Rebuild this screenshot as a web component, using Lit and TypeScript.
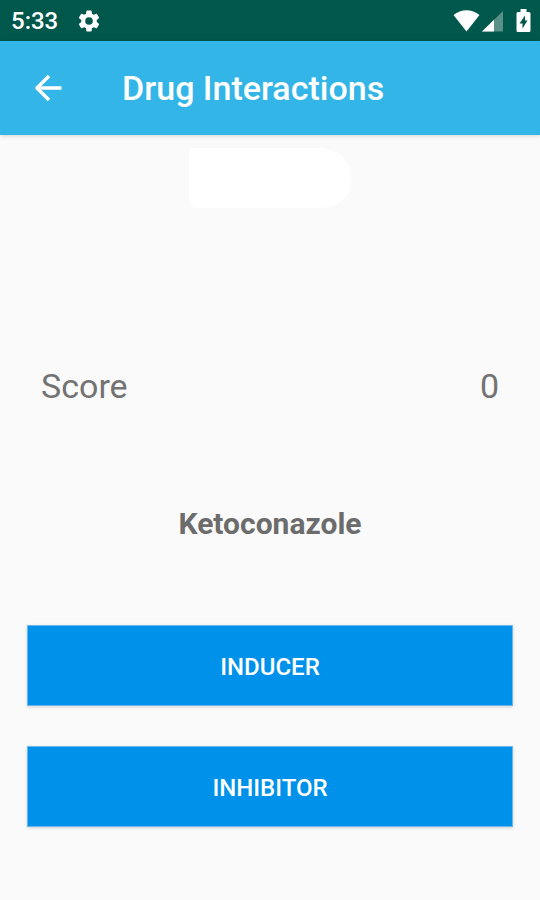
import { LitElement, html, css } from "lit";
import { customElement, property, state } from "lit/decorators.js";

@customElement("status-bar")
class StatusBar extends LitElement {
  static styles = css`
    :host {
      display: flex;
      align-items: center;
      height: 41px;
      padding: 0 9px 0 11px;
      background: #00574b;
      color: #fff;
    }
    .time {
      font-size: 24px;
      line-height: 28px;
      font-weight: 500;
    }
    svg {
      display: block;
      fill: currentColor;
    }
    .gear {
      margin-left: 18px;
    }
    .indicators {
      display: flex;
      align-items: center;
      margin-left: auto;
    }
    .battery {
      margin-left: 12px;
    }
  `;

  render() {
    return html`
      <span class="time">5:33</span>
      <svg class="gear" width="26" height="26" viewBox="0 0 24 24" aria-hidden="true">
        <path
          d="M19.14 12.94c.04-.3.06-.61.06-.94s-.02-.64-.07-.94l2.03-1.58a.49.49 0 0 0 .12-.61l-1.92-3.32a.49.49 0 0 0-.59-.22l-2.39.96a7 7 0 0 0-1.62-.94l-.36-2.54a.48.48 0 0 0-.48-.41h-3.84a.47.47 0 0 0-.47.41l-.36 2.54c-.59.24-1.13.57-1.62.94l-2.39-.96a.48.48 0 0 0-.59.22L2.74 8.87a.47.47 0 0 0 .12.61l2.03 1.58c-.05.3-.09.63-.09.94s.02.64.07.94l-2.03 1.58a.49.49 0 0 0-.12.61l1.92 3.32c.12.22.37.29.59.22l2.39-.96c.5.38 1.03.7 1.62.94l.36 2.54c.05.24.24.41.48.41h3.84c.24 0 .44-.17.47-.41l.36-2.54a7 7 0 0 0 1.62-.94l2.39.96c.22.08.47 0 .59-.22l1.92-3.32a.47.47 0 0 0-.12-.61zM12 15.5a3.5 3.5 0 1 1 0-7 3.5 3.5 0 0 1 0 7z"
        />
      </svg>
      <div class="indicators">
        <svg width="28" height="24" viewBox="0 0 28 24" aria-hidden="true">
          <path d="M.5 6C8-.3 19-.3 26.500 6L13.500 22.500z" />
        </svg>
        <svg width="23" height="24" viewBox="0 0 23 24" aria-hidden="true">
          <path d="M1 22.500 22 2v20.500z" opacity=".35" />
          <path d="M1 22.500 13 10.800v11.700z" />
        </svg>
        <svg class="battery" width="15" height="26" viewBox="0 0 15 26" aria-hidden="true">
          <path
            fill-rule="evenodd"
            d="M4.500 1h6v3H13a1.500 1.500 0 0 1 1.500 1.500v17A1.500 1.500 0 0 1 13 24H2A1.500 1.500 0 0 1 .5 22.500v-17A1.500 1.500 0 0 1 2 4h2.500zM9 7.500l-5.500 8h3v5l5-8H9z"
          />
        </svg>
      </div>
    `;
  }
}

@customElement("app-bar")
class AppBar extends LitElement {
  @property() heading = "";

  static styles = css`
    :host {
      display: flex;
      align-items: center;
      gap: 54px;
      height: 94px;
      padding: 0 28px;
      box-sizing: border-box;
      background: #33b5e7;
      color: #fff;
      box-shadow: 0 1px 4px rgba(0, 0, 0, 0.16);
    }
    .back {
      display: flex;
      padding: 0;
      border: 0;
      background: none;
      color: inherit;
      cursor: pointer;
    }
    h1 {
      margin: 0;
      font-size: 34px;
      line-height: 40px;
      font-weight: 500;
      white-space: nowrap;
    }
  `;

  render() {
    return html`
      <button class="back" type="button" aria-label="Back">
        <svg
          width="40"
          height="40"
          viewBox="0 0 40 40"
          fill="none"
          stroke="currentColor"
          stroke-width="3.400"
          stroke-linejoin="round"
        >
          <path d="M33.500 20H9M21 8 9 20 21 32" />
        </svg>
      </button>
      <h1>${this.heading}</h1>
    `;
  }
}

@customElement("app-root")
class AppRoot extends LitElement {
  @state() private score = 0;
  @state() private drug = "Ketoconazole";

  static styles = css`
    :host {
      display: block;
      min-height: 100vh;
      background: #fafafa;
      color: #6c6c6c;
      font-family: Roboto, "Noto Sans", sans-serif;
    }
    main {
      display: flex;
      flex-direction: column;
      padding: 13px 27px 40px;
    }
    .banner {
      align-self: center;
      width: 162px;
      height: 60px;
      background: #fff;
      border-radius: 4px 32px 32px 8px / 4px 28px 24px 8px;
    }
    .score {
      display: flex;
      justify-content: space-between;
      margin-top: 158px;
      padding: 0 14px;
      color: #737373;
      font-size: 34px;
      line-height: 40px;
    }
    .drug {
      margin: 100px 0 0;
      text-align: center;
      font-size: 30px;
      line-height: 36px;
      font-weight: 700;
    }
    .choices {
      display: flex;
      flex-direction: column;
      gap: 40px;
      margin-top: 83px;
    }
    .choice {
      height: 81px;
      padding: 2px 0 0;
      border: 1px solid #6fb6ee;
      background: #0091ea;
      color: #fff;
      font-family: inherit;
      font-size: 24px;
      line-height: 28px;
      font-weight: 500;
      text-transform: uppercase;
      box-shadow: 0 1px 3px rgba(0, 0, 0, 0.16);
      cursor: pointer;
    }
  `;

  render() {
    return html`
      <status-bar></status-bar>
      <app-bar heading="Drug Interactions"></app-bar>
      <main>
        <div class="banner"></div>
        <div class="score"><span>Score</span><span>${this.score}</span></div>
        <h2 class="drug">${this.drug}</h2>
        <div class="choices">
          ${["Inducer", "Inhibitor"].map(
            (label) => html`<button class="choice" type="button">${label}</button>`
          )}
        </div>
      </main>
    `;
  }
}
